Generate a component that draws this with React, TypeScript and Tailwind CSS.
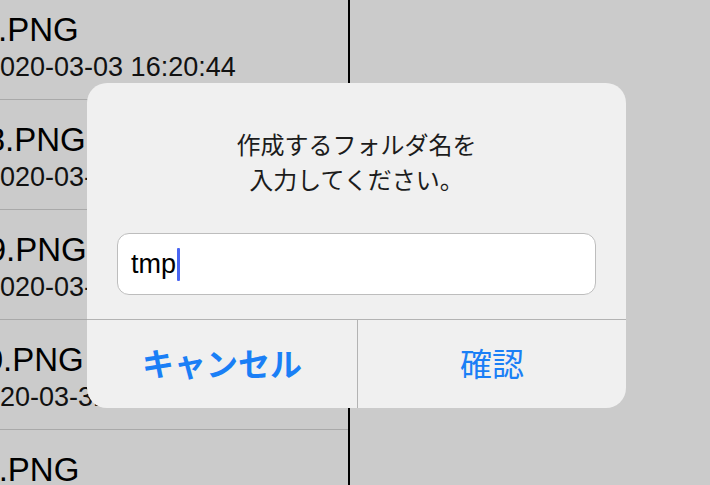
import React from "react";

const rows = [
  { name: "IMG_0007.PNG", date: "2020-03-03 16:20:44", nameCls: "-ml-[156px]", dateCls: "-ml-[15px]" },
  { name: "IMG_0008.PNG", date: "2020-03-05 09:12:31", nameCls: "-ml-[149px]", dateCls: "-ml-[15px]" },
  { name: "IMG_0009.PNG", date: "2020-03-12 11:40:05", nameCls: "-ml-[148px]", dateCls: "-ml-[15px]" },
  { name: "IMG_0010.PNG", date: "2020-03-31 18:02:17", nameCls: "-ml-[151px]", dateCls: "-ml-[30px]" },
  { name: "IMG_0011.PNG", date: "2020-04-01 10:15:48", nameCls: "-ml-[153px]", dateCls: "-ml-[15px]" },
];

export default function App() {
  return (
    <div
      className="relative w-[710px] h-[485px] overflow-hidden bg-[#cbcbcb] flex"
      style={{ fontFamily: '"Liberation Sans", Arial, sans-serif' }}
    >
      <div className="w-[348px] h-full overflow-hidden">
        <div className="-mt-[10px] flex flex-col">
          {rows.map((r) => (
            <div key={r.name} className="h-[110px] border-b border-[#a9a9a9] flex flex-col overflow-hidden shrink-0">
              <div className={`pt-[21px] text-[33px] leading-[38px] text-black whitespace-nowrap ${r.nameCls}`}>{r.name}</div>
              <div className={`mt-[3px] text-[27px] leading-[31px] text-[#111] whitespace-nowrap ${r.dateCls}`}>{r.date}</div>
            </div>
          ))}
        </div>
      </div>
      <div className="w-[2px] h-full bg-black" />
      <div className="flex-1" />

      <div className="absolute left-[87px] top-[83px] w-[539px] rounded-[20px] bg-[#f0f0f0] flex flex-col overflow-hidden">
        <div
          className="pt-[43px] text-center text-[24px] leading-[35px] text-[#1c1c1c]"
          style={{ fontFamily: '"Noto Sans CJK JP", sans-serif' }}
        >
          作成するフォルダ名を
          <br />
          入力してください。
        </div>
        <div className="mt-[37px] mx-[30px] h-[62px] rounded-[12px] border border-[#bdbdbd] bg-white flex items-center pl-[13px]">
          <span className="text-[27px] leading-[32px] text-black">tmp</span>
          <span className="ml-[1px] w-[3px] h-[33px] rounded-[1px] bg-[#4a66f2]" />
        </div>
        <div className="mt-[24px] border-t border-[#b3b3b3] flex h-[89px]">
          <div
            className="w-[270px] flex items-center justify-center pb-[5px] text-[32px] font-bold text-[#1a7ff6]"
            style={{ fontFamily: '"Noto Sans CJK JP", sans-serif' }}
          >
            キャンセル
          </div>
          <div className="w-px bg-[#b3b3b3]" />
          <div
            className="flex-1 flex items-center justify-center pb-[5px] text-[32px] text-[#1a7ff6]"
            style={{ fontFamily: '"Noto Sans CJK JP", sans-serif' }}
          >
            確認
          </div>
        </div>
      </div>
    </div>
  );
}
